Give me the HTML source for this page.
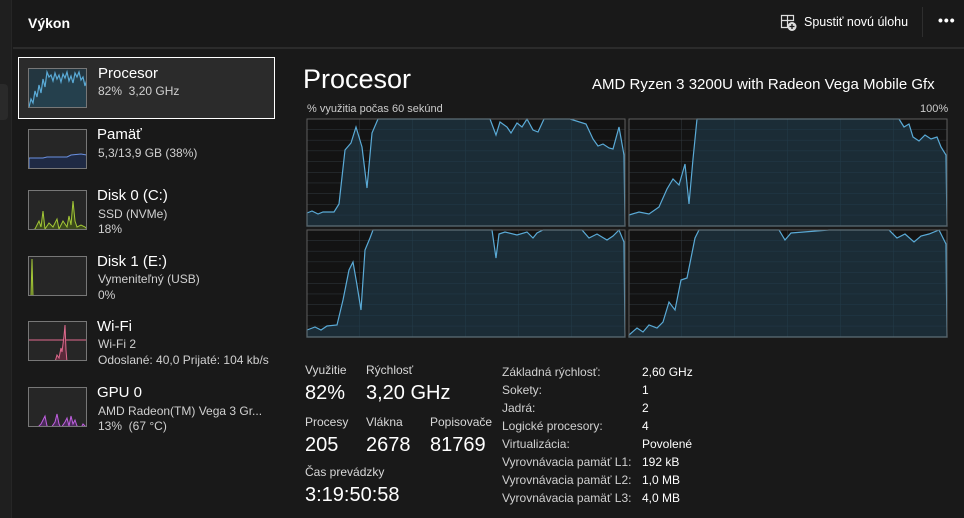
<!DOCTYPE html>
<html><head><meta charset="utf-8"><style>
*{margin:0;padding:0;box-sizing:border-box}
body{width:964px;height:518px;overflow:hidden;background:#191919;font-family:"Segoe UI","Liberation Sans",sans-serif;color:#fff;position:relative}
.a{position:absolute;white-space:nowrap}
.strip{left:0;top:0;width:12px;height:518px;background:#1f1f1f;border-right:1px solid #262626}
.t{font-size:15px}.s{font-size:12px;color:#d0d0d0}
.th{position:absolute;left:28px;width:59px;height:40px;border:1px solid #777;background:#262626;overflow:hidden}
.lab{font-size:12px;color:#d8d8d8}
.big{font-size:20px}
</style></head><body>
<div class="a strip"></div>
<div class="a" style="left:0;top:84px;width:8px;height:36px;background:#2a2a2a;border-radius:0 4px 4px 0"></div>
<div class="a" style="left:28px;top:15px;font-size:14px;font-weight:bold">Výkon</div>
<div class="a" style="left:13px;top:47px;width:951px;height:2px;background:#2b2b2b"></div>
<svg class="a" style="left:780px;top:14px" width="18" height="18" viewBox="0 0 18 18"><path d="M1.5 1.5h6v5h-6zM7.5 1.5h6v5h-6zM1.5 6.5h6v7h-6z" fill="none" stroke="#ddd" stroke-width="1.2"/><circle cx="12" cy="12.5" r="4.5" fill="#ddd"/><path d="M12 10v5M9.5 12.5h5" stroke="#191919" stroke-width="1.3"/></svg>
<div class="a" style="left:804px;top:15px;font-size:12.5px">Spustiť novú úlohu</div>
<div class="a" style="left:922px;top:7px;width:1px;height:30px;background:#2e2e2e"></div>
<div class="a" style="left:938px;top:12px;font-size:14px;letter-spacing:1px;font-weight:bold">•••</div>

<div class="a" style="left:18px;top:57px;width:257px;height:62px;border:1.5px solid #fff;background:#2b2b2b"></div>
<div class="th" style="top:68px;background:#233640"><svg width="59" height="40"><polyline points="0,38 2,30 4,34 6,22 8,28 10,16 12,24 14,10 16,18 18,3 20,8 22,6 24,12 26,4 28,10 30,6 32,13 34,5 36,9 38,3 40,12 42,7 44,14 46,4 48,8 50,3 52,11 54,8 56,17 58,10 58,40 0,40" fill="#25404d" stroke="#5aaad6" stroke-width="1.2"/></svg></div>
<div class="a t" style="left:98px;top:65px">Procesor</div>
<div class="a s" style="left:98px;top:84px">82%&nbsp; 3,20 GHz</div>

<div class="th" style="top:129px"><svg width="59" height="40"><polygon points="0,28 14,28 18,27 38,27 42,25 52,24 58,25 58,40 0,40" fill="#1f2a44" stroke="#6a90e0" stroke-width="1"/></svg></div>
<div class="a t" style="left:97px;top:126px">Pamäť</div>
<div class="a s" style="left:98px;top:146px">5,3/13,9 GB (38%)</div>

<div class="th" style="top:190px"><svg width="59" height="40"><polyline points="0,40 6,38 10,30 12,36 14,20 16,38 20,32 24,36 28,28 30,38 34,30 38,36 40,25 42,34 44,10 46,30 48,36 52,34 56,36 58,38 58,40" fill="#3c4a1c" stroke="#a4c837" stroke-width="1"/></svg></div>
<div class="a t" style="left:97px;top:187px">Disk 0 (C:)</div>
<div class="a s" style="left:98px;top:207px">SSD (NVMe)</div>
<div class="a s" style="left:98px;top:222px">18%</div>

<div class="th" style="top:256px"><svg width="59" height="40"><polyline points="0,40 2,40 3,2 4,40 58,40" fill="#3c4a1c" stroke="#a4c837" stroke-width="1"/></svg></div>
<div class="a t" style="left:97px;top:253px">Disk 1 (E:)</div>
<div class="a s" style="left:98px;top:272px">Vymeniteľný (USB)</div>
<div class="a s" style="left:98px;top:288px">0%</div>

<div class="th" style="top:321px"><svg width="59" height="40"><line x1="0" y1="18" x2="59" y2="18" stroke="#e06a8e" stroke-width="1"/><polyline points="26,40 28,33 30,36 32,26 33,30 35,14 36,3 37,28 38,40" fill="#5a2a3a" stroke="#e06a8e" stroke-width="1"/></svg></div>
<div class="a t" style="left:97px;top:318px">Wi-Fi</div>
<div class="a s" style="left:98px;top:337px">Wi-Fi 2</div>
<div class="a s" style="left:98px;top:353px">Odoslané: 40,0 Prijaté: 104 kb/s</div>

<div class="th" style="top:387px"><svg width="59" height="40"><polyline points="0,40 8,40 12,36 16,28 18,38 22,40 26,34 28,26 30,36 32,40 36,34 38,30 40,38 42,28 44,36 46,32 48,38 52,40 54,36 56,38 58,40" fill="#4a2a5a" stroke="#c060e0" stroke-width="1"/></svg></div>
<div class="a t" style="left:97px;top:384px">GPU 0</div>
<div class="a s" style="left:98px;top:404px">AMD Radeon(TM) Vega 3 Gr...</div>
<div class="a s" style="left:98px;top:419px">13%&nbsp; (67 °C)</div>

<div class="a" style="left:303px;top:64px;font-size:27px">Procesor</div>
<div class="a" style="left:592px;top:76px;font-size:15px">AMD Ryzen 3 3200U with Radeon Vega Mobile Gfx</div>
<div class="a" style="left:307px;top:103px;font-size:11px;color:#ccc">% využitia počas 60 sekúnd</div>
<div class="a" style="left:920px;top:103px;font-size:11px;color:#ccc">100%</div>

<svg class="a" style="left:306px;top:118px" width="642" height="222">
<defs><pattern id="g" width="53" height="10.7" patternUnits="userSpaceOnUse" x="0"><path d="M53 0V10.7M0 10.7H53" fill="none" stroke="#2a2a2a" stroke-width="1"/></pattern>
<pattern id="g2" width="53" height="10.7" patternUnits="userSpaceOnUse"><path d="M53 0V10.7M0 10.7H53" fill="none" stroke="#5aaad6" stroke-opacity="0.12" stroke-width="1"/></pattern></defs>
<g transform="translate(1,1)">
<rect width="318" height="107" fill="#131313"/><rect width="318" height="107" fill="url(#g)"/>
<polygon points="0,94 5,92 11,95 16,93 27,93 32,85 38,31 44,24 49,8 55,28 60,69 65,14 71,0 183,0 189,16 193,3 200,8 204,14 210,4 215,8 220,0 226,11 231,13 237,0 263,0 279,5 286,20 291,27 296,25 302,29 306,30 312,8 317,36 318,107 0,107" fill="#1b2c36" stroke="#5aaad6" stroke-width="1.2"/>
<rect width="318" height="107" fill="url(#g2)"/>
<rect width="318" height="107" fill="none" stroke="#5e5e5e"/>
</g>
<g transform="translate(323,1)">
<rect width="318" height="107" fill="#131313"/><rect width="318" height="107" fill="url(#g)"/>
<polygon points="0,96 10,93 20,95 30,88 38,70 44,60 50,66 56,45 60,85 64,40 68,0 270,0 275,8 280,5 284,18 290,22 296,16 302,20 308,18 312,28 317,36 318,107 0,107" fill="#1b2c36" stroke="#5aaad6" stroke-width="1.2"/>
<rect width="318" height="107" fill="url(#g2)"/>
<rect width="318" height="107" fill="none" stroke="#5e5e5e"/>
</g>
<g transform="translate(1,112)">
<rect width="318" height="107" fill="#131313"/><rect width="318" height="107" fill="url(#g)"/>
<polygon points="0,100 8,97 14,100 20,96 30,95 36,70 42,40 46,32 50,55 54,80 58,20 63,8 66,0 185,0 189,28 192,4 198,2 210,5 220,2 226,8 230,3 236,0 275,0 282,8 290,4 300,10 306,6 312,0 317,12 318,107 0,107" fill="#1b2c36" stroke="#5aaad6" stroke-width="1.2"/>
<rect width="318" height="107" fill="url(#g2)"/>
<rect width="318" height="107" fill="none" stroke="#5e5e5e"/>
</g>
<g transform="translate(323,112)">
<rect width="318" height="107" fill="#131313"/><rect width="318" height="107" fill="url(#g)"/>
<polygon points="0,105 8,98 14,102 20,95 28,98 34,92 40,72 46,80 52,50 58,48 62,28 66,8 70,0 150,0 156,10 162,3 200,0 260,0 268,8 276,4 285,12 292,6 300,4 310,0 317,14 318,107 0,107" fill="#1b2c36" stroke="#5aaad6" stroke-width="1.2"/>
<rect width="318" height="107" fill="url(#g2)"/>
<rect width="318" height="107" fill="none" stroke="#5e5e5e"/>
</g>
</svg>

<div class="a lab" style="left:305px;top:363px">Využitie</div>
<div class="a lab" style="left:366px;top:363px">Rýchlosť</div>
<div class="a big" style="left:305px;top:382px">82%</div>
<div class="a big" style="left:366px;top:382px">3,20 GHz</div>
<div class="a lab" style="left:305px;top:415px">Procesy</div>
<div class="a lab" style="left:366px;top:415px">Vlákna</div>
<div class="a lab" style="left:430px;top:415px">Popisovače</div>
<div class="a big" style="left:305px;top:434px">205</div>
<div class="a big" style="left:366px;top:434px">2678</div>
<div class="a big" style="left:430px;top:434px">81769</div>
<div class="a lab" style="left:305px;top:465px">Čas prevádzky</div>
<div class="a big" style="left:305px;top:484px">3:19:50:58</div>

<div class="a" style="left:502px;top:363px;font-size:12px;line-height:18px;color:#d0d0d0">Základná rýchlosť:<br>Sokety:<br>Jadrá:<br>Logické procesory:<br>Virtualizácia:<br>Vyrovnávacia pamäť L1:<br>Vyrovnávacia pamäť L2:<br>Vyrovnávacia pamäť L3:</div>
<div class="a" style="left:642px;top:363px;font-size:12px;line-height:18px;color:#fff">2,60 GHz<br>1<br>2<br>4<br>Povolené<br>192 kB<br>1,0 MB<br>4,0 MB</div>
</body></html>
